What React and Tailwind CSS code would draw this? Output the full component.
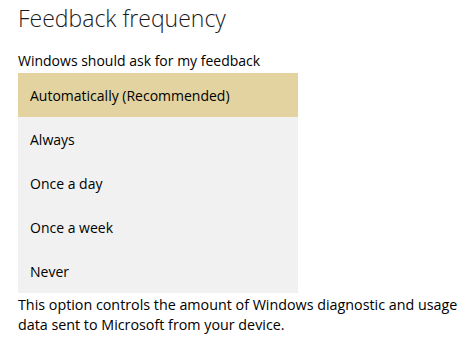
const options = [
    "Automatically (Recommended)",
    "Always",
    "Once a day",
    "Once a week",
    "Never",
];

const App = () => {
    const selected = 0;

    return (
        <div className="w-[470px] h-[346px] bg-white text-black font-['Open_Sans',sans-serif] px-[18px] pt-[2px]">
            <h1 className="text-[23px] leading-[32px] font-light text-[#1a1a1a]">
                Feedback frequency
            </h1>
            <p className="mt-[17px] text-[14px] leading-[20px]">
                Windows should ask for my feedback
            </p>
            <div className="mt-[2px] w-[280px] bg-[#f1f1f1]">
                {options.map((opt, i) => (
                    <div
                        key={opt}
                        className={
                            i === selected
                                ? "h-[44px] flex items-center px-3 bg-[#e2d3a0] text-[14px] leading-[21px]"
                                : "h-[44px] flex items-center px-3 text-[14px] leading-[21px]"
                        }
                    >
                        {opt}
                    </div>
                ))}
            </div>
            <p className="mt-[2px] text-[14.3px] leading-[20px] whitespace-nowrap">
                This option controls the amount of Windows diagnostic and usage
                <br />
                data sent to Microsoft from your device.
            </p>
        </div>
    );
};

export default App;
